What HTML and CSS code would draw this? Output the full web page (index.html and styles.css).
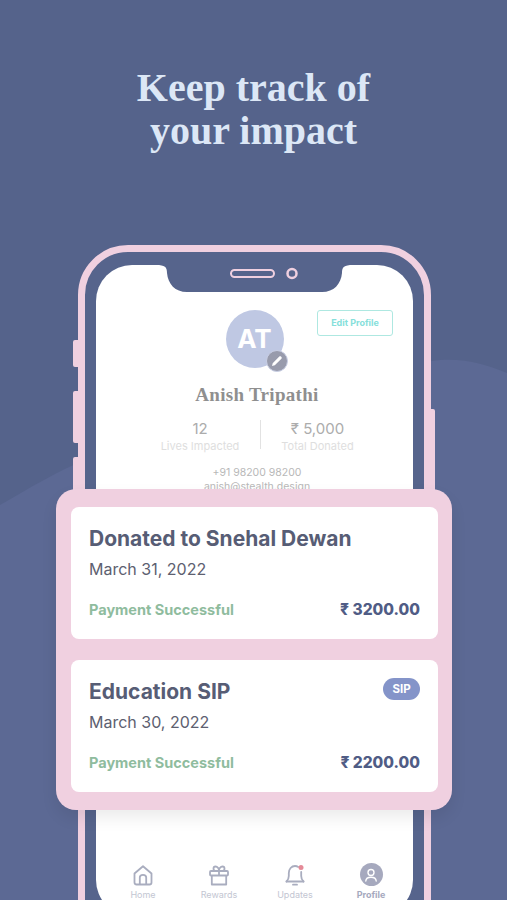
FILE: index.html
```html
<!DOCTYPE html>
<html lang="en">

<head>
    <meta charset="UTF-8">
    <meta name="viewport" content="width=device-width, initial-scale=1.0">
    <title>Keep track of your impact</title>
    <link rel="stylesheet" href="styles.css">
</head>

<body>

    <div class="page">
        <svg class="wave" viewBox="0 0 507 900" preserveAspectRatio="none" aria-hidden="true">
            <path d="M0 505C30 488 55 472 90 458C200 412 340 372 440 360C465 358 488 365 507 373V900H0Z" fill="#5c6994"/>
        </svg>

        <h1 class="headline">Keep track of<br>your impact</h1>

        <div class="phone">
            <span class="side-btn btn-a"></span>
            <span class="side-btn btn-b"></span>
            <span class="side-btn btn-c"></span>
            <span class="side-btn btn-d"></span>

            <div class="screen">
                <svg class="notch" width="197" height="28" viewBox="0 0 197 28" aria-hidden="true">
                    <path d="M0 0H197C188 0 186 2 186 8C185 19 178 27 166 27H31C19 27 12 19 11 8C11 2 9 0 0 0Z" fill="#56648c"/>
                    <rect x="75" y="5" width="43" height="7" rx="3.5" fill="none" stroke="#f0d0e0" stroke-width="2"/>
                    <circle cx="136" cy="8.500" r="4.500" fill="none" stroke="#f0d0e0" stroke-width="2.500"/>
                </svg>

                <div class="profile-top">
                    <div class="avatar">
                        AT
                        <span class="avatar-edit">
                            <svg width="12" height="12" viewBox="0 0 12 12" aria-hidden="true">
                                <path d="M1 11L1.700 8.200L8.300 1.600C8.800 1.100 9.500 1.100 10 1.600L10.400 2C10.900 2.500 10.900 3.200 10.400 3.700L3.800 10.300Z" fill="#fff"/>
                            </svg>
                        </span>
                    </div>
                    <a class="edit-btn">Edit Profile</a>
                </div>

                <h2 class="name">Anish Tripathi</h2>

                <div class="stats">
                    <div class="stat">
                        <span class="stat-value">12</span>
                        <span class="stat-label">Lives Impacted</span>
                    </div>
                    <div class="stat stat-right">
                        <span class="stat-value">₹ 5,000</span>
                        <span class="stat-label">Total Donated</span>
                    </div>
                </div>

                <div class="contact">
                    <p>+91 98200 98200</p>
                    <p>anish@stealth.design</p>
                </div>

                <nav class="tabs">
                    <div class="tab">
                        <svg width="24" height="24" viewBox="0 0 24 24" fill="none" stroke="#a9adbf" stroke-width="1.800" stroke-linejoin="round" aria-hidden="true">
                            <path d="M3.500 10.500L12 3.200L20.500 10.500V19.500C20.500 20.800 19.600 21.500 18.500 21.500H5.500C4.400 21.500 3.500 20.800 3.500 19.500Z"/>
                            <path d="M8.800 21.500V14.500C8.800 12.900 10 11.800 12 11.800C14 11.800 15.200 12.900 15.200 14.500V21.500"/>
                        </svg>
                        <span>Home</span>
                    </div>
                    <div class="tab">
                        <svg width="24" height="24" viewBox="0 0 24 24" fill="none" stroke="#a9adbf" stroke-width="1.800" stroke-linejoin="round" aria-hidden="true">
                            <rect x="3" y="8" width="18" height="4.500" rx="1"/>
                            <path d="M4.800 12.500V21.500H19.200V12.500"/>
                            <path d="M12 8V12.500"/>
                            <path d="M12 8H8.500C7 8 6.500 6.800 6.500 5.600C6.500 4.200 7.500 3.500 8.500 3.500C10.500 3.500 12 5.500 12 8C12 5.500 13.500 3.500 15.500 3.500C16.500 3.500 17.500 4.200 17.500 5.600C17.500 6.800 17 8 15.500 8Z"/>
                        </svg>
                        <span>Rewards</span>
                    </div>
                    <div class="tab">
                        <svg width="24" height="24" viewBox="0 0 24 24" fill="none" stroke="#a9adbf" stroke-width="1.800" stroke-linecap="round" stroke-linejoin="round" aria-hidden="true">
                            <path d="M3.500 18.500C5 17 5.800 15.500 5.800 13V10C5.800 6 8.500 3 12 3C13.200 3 14.300 3.300 15.200 3.900"/>
                            <path d="M18.200 9V13C18.200 15.500 19 17 20.500 18.500"/>
                            <path d="M3.500 18.500H20.500"/>
                            <path d="M10 21.700H14"/>
                            <circle cx="18" cy="4.500" r="2.500" fill="#e58a98" stroke="none"/>
                        </svg>
                        <span>Updates</span>
                    </div>
                    <div class="tab tab-active">
                        <span class="tab-circle">
                            <svg width="14" height="14" viewBox="0 0 14 14" fill="none" stroke="#fff" stroke-width="1.400" stroke-linecap="round" aria-hidden="true">
                                <circle cx="7" cy="4.500" r="3"/>
                                <path d="M1.800 13C2 10.500 4 9.300 7 9.300C10 9.300 12 10.500 12.200 13"/>
                            </svg>
                        </span>
                        <span>Profile</span>
                    </div>
                </nav>
            </div>
        </div>

        <div class="panel">
            <div class="card">
                <div class="card-title">Donated to Snehal Dewan</div>
                <div class="card-date">March 31, 2022</div>
                <div class="card-foot">
                    <span class="status">Payment Successful</span>
                    <span class="amount">₹ 3200.00</span>
                </div>
            </div>
            <div class="card">
                <span class="pill">SIP</span>
                <div class="card-title">Education SIP</div>
                <div class="card-date">March 30, 2022</div>
                <div class="card-foot">
                    <span class="status">Payment Successful</span>
                    <span class="amount">₹ 2200.00</span>
                </div>
            </div>
        </div>
    </div>

</body>

</html>
```

FILE: styles.css
```css
html, body {
    margin: 0;
    height: 900px;
    overflow: hidden;
}

body {
    background-color: #55638b;
    font-family: 'Inter', 'Noto Sans', sans-serif;
}

.page {
    position: relative;
    width: 507px;
    height: 900px;
    overflow: hidden;
}

.wave {
    position: absolute;
    top: 0;
    left: 0;
    width: 507px;
    height: 900px;
}

.headline {
    position: relative;
    margin: 0;
    padding-top: 66px;
    font-family: 'Liberation Serif', serif;
    font-size: 40px;
    line-height: 43px;
    font-weight: 700;
    text-align: center;
    color: #dce7f6;
}

/* phone frame */
.phone {
    position: relative;
    width: 353px;
    height: 720px;
    box-sizing: border-box;
    margin: 93px 0 0 78px;
    padding: 13px 11px 0;
    border: 7px solid #f0d0e0;
    border-radius: 50px;
    background-color: #56648c;
}

.side-btn {
    position: absolute;
    left: -12px;
    width: 6px;
    background-color: #f0d0e0;
    border-radius: 2px 0 0 2px;
}

.btn-a {
    top: 88px;
    height: 27px;
}

.btn-b {
    top: 139px;
    height: 52px;
}

.btn-c {
    top: 205px;
    height: 60px;
}

.btn-d {
    top: 157px;
    left: auto;
    right: -11px;
    width: 4px;
    height: 90px;
    border-radius: 0 2px 2px 0;
}

.screen {
    position: relative;
    display: flex;
    flex-direction: column;
    height: 651px;
    background-color: #fff;
    border-radius: 36px;
    overflow: hidden;
}

.notch {
    position: absolute;
    top: 0;
    left: 60px;
}

.profile-top {
    display: grid;
    grid-template-columns: 1fr 58px 1fr;
    margin-top: 45px;
}

.avatar {
    grid-column: 2;
    position: relative;
    width: 58px;
    height: 58px;
    border-radius: 50%;
    background-color: #bfc8e3;
    color: #fff;
    font-size: 26px;
    font-weight: 700;
    line-height: 58px;
    text-align: center;
}

.avatar-edit {
    position: absolute;
    right: -4px;
    bottom: -4px;
    display: flex;
    align-items: center;
    justify-content: center;
    width: 22px;
    height: 22px;
    box-sizing: border-box;
    border: 1px solid #c9cfe4;
    border-radius: 50%;
    background-color: #989bac;
}

.edit-btn {
    justify-self: end;
    width: 76px;
    height: 26px;
    margin-right: 20px;
    box-sizing: border-box;
    border: 1.500px solid #aee8e1;
    border-radius: 3px;
    color: #86dfdb;
    font-size: 9px;
    font-weight: 700;
    line-height: 23px;
    text-align: center;
}

.name {
    margin: 15px 0 0 5px;
    font-family: 'Liberation Serif', serif;
    font-size: 19px;
    line-height: 24px;
    font-weight: 700;
    letter-spacing: 0.3px;
    text-align: center;
    color: #8f8f8f;
}

.stats {
    display: grid;
    grid-template-columns: 120px 114px;
    margin: 13px 0 0 44px;
}

.stat {
    display: flex;
    flex-direction: column;
    align-items: center;
    height: 29px;
}

.stat-right {
    border-left: 1px solid #e2e2e2;
}

.stat-value {
    font-size: 15px;
    line-height: 18px;
    color: #acacac;
}

.stat-label {
    font-size: 11px;
    line-height: 16px;
    color: #dedede;
}

.contact {
    margin: 17px 0 0 5px;
    font-size: 10.500px;
    line-height: 14px;
    text-align: center;
    color: #b8b8b8;
}

.contact p {
    margin: 0;
}

.tabs {
    display: grid;
    grid-template-columns: repeat(4, 76px);
    margin-top: auto;
    padding: 0 0 15px 9px;
}

.tab {
    display: flex;
    flex-direction: column;
    align-items: center;
    gap: 2px;
    font-size: 9px;
    line-height: 12px;
    color: #c3c6d2;
}

.tab-active {
    font-weight: 700;
    color: #a6a9be;
}

.tab-circle {
    display: flex;
    align-items: center;
    justify-content: center;
    width: 23px;
    height: 23px;
    margin-bottom: 1px;
    border-radius: 50%;
    background-color: #a6a9be;
}

/* pink panel laid over the phone */
.panel {
    position: absolute;
    top: 489px;
    left: 56px;
    display: flex;
    flex-direction: column;
    gap: 21px;
    width: 396px;
    height: 321px;
    box-sizing: border-box;
    padding: 18px 14px 18px 15px;
    background-color: #f0d0e0;
    border-radius: 20px;
    box-shadow: 0 8px 16px rgba(0, 0, 0, 0.08);
}

.card {
    position: relative;
    height: 132px;
    box-sizing: border-box;
    padding: 19px 18px 0;
    background-color: #fff;
    border-radius: 8px;
}

.card-title {
    font-size: 21px;
    line-height: 26px;
    font-weight: 700;
    color: #575d75;
}

.card-date {
    margin-top: 6px;
    font-size: 16px;
    line-height: 22px;
    color: #5d6070;
}

.card-foot {
    display: flex;
    justify-content: space-between;
    align-items: center;
    margin-top: 19px;
}

.status {
    font-size: 14.500px;
    font-weight: 700;
    line-height: 22px;
    color: #8fbc9e;
}

.amount {
    font-size: 15.500px;
    font-weight: 800;
    line-height: 22px;
    color: #505c85;
}

.pill {
    position: absolute;
    top: 18px;
    right: 18px;
    width: 37px;
    height: 22px;
    border-radius: 11px;
    background-color: #8494c9;
    color: #fff;
    font-size: 11.500px;
    font-weight: 700;
    line-height: 22px;
    text-align: center;
}
```
